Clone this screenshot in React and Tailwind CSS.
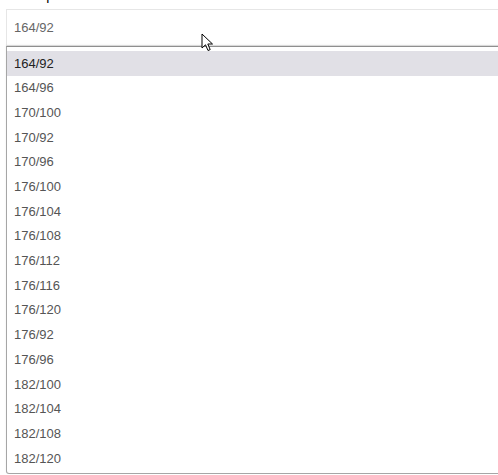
const sizes = [
  '164/92', '164/96', '170/100', '170/92', '170/96', '176/100', '176/104', '176/108',
  '176/112', '176/116', '176/120', '176/92', '176/96', '182/100', '182/104', '182/108', '182/120',
];

function Cursor() {
  return (
    <svg className="absolute left-[201px] top-[33px]" width="14" height="20" viewBox="0 0 14 20">
      <path d="M1 1 L1 15 L4.5 11.8 L7 17.5 L9.2 16.6 L6.8 11 L11.5 11 Z" fill="#fff" stroke="#000" strokeWidth="1" strokeLinejoin="miter" />
    </svg>
  );
}

export default function App() {
  const selected = '164/92';
  return (
    <div className="relative h-[475px] overflow-hidden bg-white pl-[6px] text-[13px]" style={{ fontFamily: '"Liberation Sans", Arial, sans-serif' }}>
      <div className="-mt-[12px] h-[21px] text-[14px] leading-[14px] text-black">Размер:</div>
      <div className="flex h-[37px] w-[520px] items-center border border-[#e6e6e6] pl-[7px] text-[#666]">
        {selected}
      </div>
      <div className="w-[520px] rounded-bl-[3px] border border-[#a6a6a6] border-t-[#8f8f8f] bg-white pt-[4px] pb-[2px] shadow-[0_-1px_2px_rgba(0,0,0,0.08)]">
        {sizes.map((s) => (
          <div
            key={s}
            className={
              s === selected
                ? 'flex h-[24.7px] items-center bg-[#e1e0e6] pl-[7px] text-[#222]'
                : 'flex h-[24.7px] items-center pl-[7px] text-[#555]'
            }
          >
            {s}
          </div>
        ))}
      </div>
      <Cursor />
    </div>
  );
}
